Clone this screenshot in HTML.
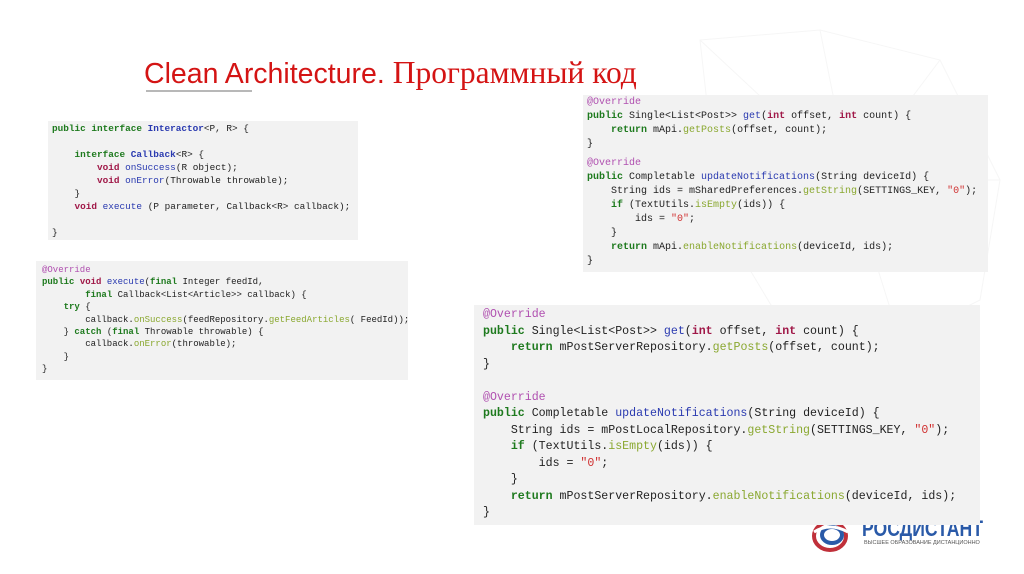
<!DOCTYPE html>
<html><head><meta charset="utf-8"><style>
body{margin:0;width:1024px;height:574px;background:#fff;position:relative;overflow:hidden;font-family:"Liberation Sans",sans-serif}
.t{position:absolute;left:144px;top:55px;font-size:28.5px;color:#d41414;white-space:nowrap}
.t .s{font-family:"Liberation Serif","DejaVu Serif",serif;font-size:31.5px}
.ul{position:absolute;left:146px;top:90px;width:106px;height:2px;background:#b8b8b8}
.b{position:absolute;background:#f2f2f2;font-family:"Liberation Mono",monospace;color:#222;white-space:pre;margin:0;z-index:2}
.k{color:#1e7a1e;font-weight:bold}
.v{color:#a01848;font-weight:bold}
.f{color:#2a3ab0}
.m{color:#8aa830}
.a{color:#b050b0}
.st{color:#d03030}
.n{color:#2a3ab0;font-weight:bold}
</style></head><body>
<svg style="position:absolute;left:0;top:0" width="1024" height="574">
<g stroke="#f6f6f6" fill="none" stroke-width="1">
<path d="M700 40 L820 30 L940 60 L1000 180 L980 300 L900 340 L780 320 L720 220 Z M820 30 L850 180 L1000 180 M850 180 L900 340 M850 180 L720 220 M700 40 L850 180 M940 60 L850 180"/>
</g></svg>
<div class="t">Clean Architecture. <span class="s">Программный код</span></div>
<div class="ul"></div>

<pre class="b" style="left:48px;top:121px;width:310px;height:119px;font-size:9.4px;line-height:13px;padding:1px 0 0 4px;box-sizing:border-box"><span class="k">public interface</span> <span class="n">Interactor</span>&lt;P, R&gt; {

    <span class="k">interface</span> <span class="n">Callback</span>&lt;R&gt; {
        <span class="v">void</span> <span class="f">onSuccess</span>(R object);
        <span class="v">void</span> <span class="f">onError</span>(Throwable throwable);
    }
    <span class="v">void</span> <span class="f">execute</span> (P parameter, Callback&lt;R&gt; callback);

}</pre>

<pre class="b" style="left:36px;top:261px;width:372px;height:119px;font-size:9px;line-height:12.4px;padding:3px 0 0 6px;box-sizing:border-box"><span class="a">@Override</span>
<span class="k">public</span> <span class="v">void</span> <span class="f">execute</span>(<span class="k">final</span> Integer feedId,
        <span class="k">final</span> Callback&lt;List&lt;Article&gt;&gt; callback) {
    <span class="k">try</span> {
        callback.<span class="m">onSuccess</span>(feedRepository.<span class="m">getFeedArticles</span>( FeedId));
    } <span class="k">catch</span> (<span class="k">final</span> Throwable throwable) {
        callback.<span class="m">onError</span>(throwable);
    }
}</pre>

<pre class="b" style="left:583px;top:95px;width:405px;height:177px;font-size:10px;line-height:14px;padding:1px 0 0 4px;box-sizing:border-box"><span class="a">@Override</span>
<span class="k">public</span> Single&lt;List&lt;Post&gt;&gt; <span class="f">get</span>(<span class="v">int</span> offset, <span class="v">int</span> count) {
    <span class="k">return</span> mApi.<span class="m">getPosts</span>(offset, count);
}
<span style="display:block;height:5px"></span><span class="a">@Override</span>
<span class="k">public</span> Completable <span class="f">updateNotifications</span>(String deviceId) {
    String ids = mSharedPreferences.<span class="m">getString</span>(SETTINGS_KEY, <span class="st">"0"</span>);
    <span class="k">if</span> (TextUtils.<span class="m">isEmpty</span>(ids)) {
        ids = <span class="st">"0"</span>;
    }
    <span class="k">return</span> mApi.<span class="m">enableNotifications</span>(deviceId, ids);
}</pre>

<pre class="b" style="left:474px;top:305px;width:506px;height:220px;font-size:11.6px;line-height:16.5px;padding:2px 0 0 9px;box-sizing:border-box"><span class="a">@Override</span>
<span class="k">public</span> Single&lt;List&lt;Post&gt;&gt; <span class="f">get</span>(<span class="v">int</span> offset, <span class="v">int</span> count) {
    <span class="k">return</span> mPostServerRepository.<span class="m">getPosts</span>(offset, count);
}

<span class="a">@Override</span>
<span class="k">public</span> Completable <span class="f">updateNotifications</span>(String deviceId) {
    String ids = mPostLocalRepository.<span class="m">getString</span>(SETTINGS_KEY, <span class="st">"0"</span>);
    <span class="k">if</span> (TextUtils.<span class="m">isEmpty</span>(ids)) {
        ids = <span class="st">"0"</span>;
    }
    <span class="k">return</span> mPostServerRepository.<span class="m">enableNotifications</span>(deviceId, ids);
}</pre>

<svg style="position:absolute;left:808px;top:518px" width="50" height="36">
<ellipse cx="22" cy="18" rx="16" ry="14" fill="none" stroke="#c0303a" stroke-width="4"/>
<ellipse cx="24" cy="17" rx="10" ry="8" fill="none" stroke="#2a5aa8" stroke-width="4"/>
<path d="M6 14 Q22 4 40 14" stroke="#fff" stroke-width="3" fill="none"/>
</svg>
<div style="position:absolute;left:862px;top:516px;font-size:22px;font-weight:bold;color:#2a5aa8;transform:scaleX(0.8);transform-origin:left top;white-space:nowrap">РОСДИСТАНТ</div>
<div style="position:absolute;left:864px;top:540px;font-size:5.5px;color:#555;white-space:nowrap">ВЫСШЕЕ ОБРАЗОВАНИЕ ДИСТАНЦИОННО</div>
</body></html>
